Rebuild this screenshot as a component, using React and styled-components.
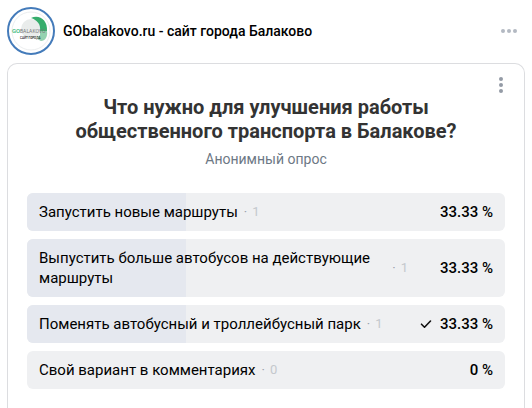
import React from "react";
import styled, { createGlobalStyle } from "styled-components";

const options = [
  { text: "Запустить новые маршруты", votes: 1, percent: 33.33 },
  { text: "Выпустить больше автобусов на действующие маршруты", votes: 1, percent: 33.33 },
  { text: "Поменять автобусный и троллейбусный парк", votes: 1, percent: 33.33, chosen: true },
  { text: "Свой вариант в комментариях", votes: 0, percent: 0 },
];

const Logo = () => (
  <svg width="44" height="44" viewBox="0 0 44 44" aria-hidden="true">
    <circle cx="22" cy="22" r="19" fill="#fff" stroke="#eceeef" />
    <circle cx="22" cy="20" r="10" fill="#e9eceb" />
    <path d="M22 9C30 5 39 11 38 22H31C32 15 28 11 22 9Z" fill="#36ad6c" />
    <path d="M31 22H38C39 28 36 32 32 32C29 31 28 28 31 26Z" fill="#94d2b0" />
    <text x="3" y="24" fontSize="6" fontWeight="500" fill="#2fb573">GO</text>
    <text x="11" y="24" fontSize="5" fill="#777">BALAKOVO</text>
    <text x="11" y="30" fontSize="3" fontWeight="500" fill="#222">САЙТ ГОРОДА</text>
  </svg>
);

const Dots = ({ vertical }) => (
  <svg width="18" height="18" viewBox="0 0 18 18" aria-hidden="true">
    <g transform={vertical ? "rotate(90 9 9)" : undefined} fill="currentColor">
      <circle cx="3" cy="9" r="2" />
      <circle cx="9" cy="9" r="2" />
      <circle cx="15" cy="9" r="2" />
    </g>
  </svg>
);

const Check = () => (
  <svg width="12" height="12" viewBox="0 0 12 12" role="img" aria-label="Ваш голос">
    <path
      d="M1.5 6.2L4.5 9.2L10.5 3"
      fill="none"
      stroke="#111"
      strokeWidth="1.6"
      strokeLinecap="round"
      strokeLinejoin="round"
    />
  </svg>
);

const App = () => {
  return (
    <>
      <GlobalStyle />
      <Post>
        <Header>
          <Avatar href="#" aria-label="GObalakovo.ru">
            <Logo />
          </Avatar>
          <Author href="#">GObalakovo.ru - сайт города Балаково</Author>
          <MenuButton type="button" aria-label="Меню записи">
            <Dots />
          </MenuButton>
        </Header>

        <Poll>
          <PollMenu type="button" aria-label="Меню опроса">
            <Dots vertical />
          </PollMenu>
          <Title>Что нужно для улучшения работы общественного транспорта в Балакове?</Title>
          <Subtitle>Анонимный опрос</Subtitle>

          <Options>
            {options.map((option) => (
              <Option key={option.text}>
                <Fill style={{ width: `${option.percent}%` }} />
                <Answer>
                  <span>{option.text}</span>
                  <Votes>
                    <Separator>·</Separator>
                    <span>{option.votes}</span>
                  </Votes>
                </Answer>
                <Result>
                  {option.chosen && <Check />}
                  <span>{option.percent} %</span>
                </Result>
              </Option>
            ))}
          </Options>
        </Poll>
      </Post>
    </>
  );
};

export default App;

// Styles
const GlobalStyle = createGlobalStyle`
  * {
    box-sizing: border-box;
  }

  body {
    margin: 0;
    background: #fff;
    color: #000;
    font-family: Roboto, "Noto Sans", sans-serif;
    font-size: 15px;
    line-height: 20px;
  }
`;

const Post = styled.article`
  display: flex;
  flex-direction: column;
  min-height: 100vh;
  padding: 7px 7px 0;
`;

const Header = styled.header`
  display: flex;
  align-items: center;
  gap: 8px;
  margin-bottom: 8px;
`;

const Avatar = styled.a`
  display: flex;
  align-items: center;
  justify-content: center;
  width: 48px;
  height: 48px;
  border: 2px solid #447bba;
  border-radius: 50%;
`;

const Author = styled.a`
  flex: 1;
  color: #000;
  font-size: 14px;
  font-weight: 500;
  text-decoration: none;
`;

const MenuButton = styled.button`
  display: flex;
  margin-right: 7px;
  padding: 0;
  border: 0;
  background: none;
  color: #b3b9c2;
  cursor: pointer;
`;

const Poll = styled.section`
  position: relative;
  flex: 1;
  padding: 31px 19px 18px;
  border: 1px solid #dcdde0;
  border-bottom: 0;
  border-radius: 10px 10px 0 0;
`;

const PollMenu = styled(MenuButton)`
  position: absolute;
  top: 12px;
  right: 14px;
  margin: 0;
  color: #949ba6;
`;

const Title = styled.h1`
  max-width: 400px;
  margin: 0 auto;
  color: #333;
  font-size: 20px;
  font-weight: 700;
  line-height: 24px;
  text-align: center;
`;

const Subtitle = styled.p`
  margin: 6px 0 24px;
  color: #6d7885;
  font-size: 14px;
  text-align: center;
`;

const Options = styled.ul`
  display: flex;
  flex-direction: column;
  gap: 8px;
  margin: 0;
  padding: 0;
  list-style: none;
`;

const Option = styled.li`
  position: relative;
  display: flex;
  align-items: center;
  justify-content: space-between;
  gap: 32px;
  padding: 9px 12px;
  border-radius: 6px;
  background: #eff0f2;
  overflow: hidden;
`;

const Fill = styled.div`
  position: absolute;
  top: 0;
  bottom: 0;
  left: 0;
  background: #e5e8ef;
`;

const Answer = styled.div`
  position: relative;
  display: flex;
  align-items: center;
  gap: 6px;
`;

const Votes = styled.span`
  display: flex;
  gap: 5px;
  color: #c4c8cd;
  font-size: 13px;
`;

const Separator = styled.span`
  color: #99a2ad;
`;

const Result = styled.div`
  position: relative;
  display: flex;
  flex-shrink: 0;
  align-items: center;
  gap: 8px;
  font-weight: 500;
`;
